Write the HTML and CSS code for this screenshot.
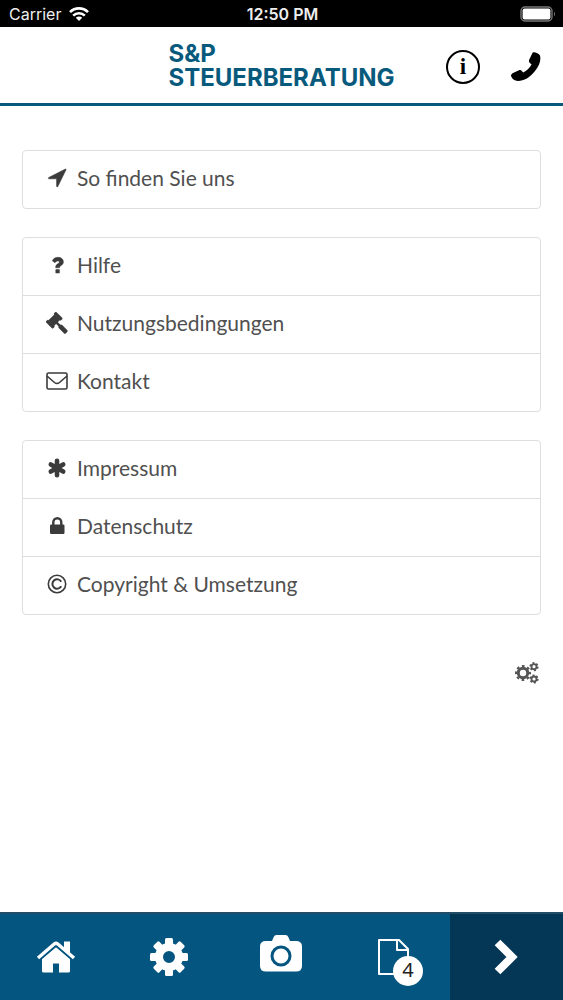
FILE: index.html
```html
<!DOCTYPE html>
<html lang="de">
<head>
<meta charset="utf-8">
<meta name="viewport" content="width=device-width, initial-scale=1">
<title>S&amp;P Steuerberatung</title>
<link rel="stylesheet" href="styles.css">
</head>
<body>
<div class="status">
  <div class="carrier">Carrier
    <svg width="20" height="14" viewBox="0 0 20 14" fill="none" stroke="#fff" stroke-width="2.6"><path d="M1 5.2a12.6 12.6 0 0 1 18 0M4.2 8.6a8.2 8.2 0 0 1 11.6 0"/><path d="M6.8 10.8a4.6 4.6 0 0 1 6.4 0L10 14z" fill="#fff" stroke="none"/></svg>
  </div>
  <div class="time">12:50 PM</div>
  <svg class="battery" width="36" height="16" viewBox="0 0 36 16"><rect x="1" y="1" width="31" height="14" rx="4" fill="none" stroke="#77777a" stroke-width="1.4"/><rect x="2.6" y="2.6" width="27.8" height="10.8" rx="2" fill="#fff"/><path d="M34 5.500q2 2.500 0 5z" fill="#77777a"/></svg>
</div>
<header class="header">
  <h1 class="logo">S&amp;P<br>STEUERBERATUNG</h1>
  <div class="actions">
    <button class="icon-button info" aria-label="Information">i</button>
    <button class="icon-button" aria-label="Anrufen">
      <svg width="30" height="30" viewBox="0 0 30 30"><path d="M22.500 .3C24 0 28 1.500 29 3.500C30.200 8 28.500 13.500 24 19C19 25.500 13 29 7 29C3.500 29 .8 26.800 0 23.800C0 22.600.8 21.600 2 21L8 18.200C9.200 17.700 10.200 18 11 19.200L12.300 20.600C15.500 19 18.600 16 20.600 12.600L18.600 10.700C17.800 9.600 17.700 8.700 18.300 7.600L21.200 1.400C21.500 .7 21.800 .4 22.500 .3Z"/></svg>
    </button>
  </div>
</header>
<main class="content">
  <ul class="group">
    <li><a class="row" href="#anfahrt"><svg viewBox="0 0 22 22"><path d="M19.500 2q.8-.1.500.7l-8.200 16.800q-1 1-1.200-.3v-7.400H2.900q-1.200-.3-.2-1.200z" stroke="#3b3b3b" stroke-width=".6"/></svg>So finden Sie uns</a></li>
  </ul>
  <ul class="group">
    <li><a class="row" href="#hilfe"><svg viewBox="0 0 22 22"><path d="M6.200 6.700Q8.100 3.200 12 3.300c3.200 0 5.400 2 5.400 4.500 0 2.100-1.200 3.100-2.600 4-1 .6-1.300 1-1.300 2H9.700c-.1-2.200.5-3.100 2.400-4.200.9-.5 1.200-.8 1.200-1.500 0-1.500-2.800-1.800-4.300.7z" stroke="#3b3b3b" stroke-width=".5"/><rect x="9.500" y="15.200" width="4.200" height="4" rx=".5"/></svg>Hilfe</a></li>
    <li><a class="row" href="#nutzung"><svg viewBox="0 0 22 22"><g transform="translate(8.200 8.200) rotate(-45)"><rect x="-4.500" y="-4" width="9" height="8"/><rect x="-7.300" y="-5" width="3.400" height="10" rx="1"/><rect x="3.900" y="-5" width="3.400" height="10" rx="1"/><rect x="-1.200" y="3" width="2.400" height="6"/><rect x="-2.300" y="7.500" width="4.600" height="10" rx="1.500"/></g></svg>Nutzungsbedingungen</a></li>
    <li><a class="row" href="#kontakt"><svg viewBox="0 0 22 22" class="line"><rect x="1" y="3" width="20" height="16" rx="1.500"/><path d="M1 6q4 3.500 7.500 6.500 2.500 2 5 0Q17 9.500 21 6"/></svg>Kontakt</a></li>
  </ul>
  <ul class="group">
    <li><a class="row" href="#impressum"><svg viewBox="0 0 22 22"><g stroke="#3b3b3b" stroke-width="4.600" stroke-linecap="round"><path d="M11 3.800v14.400M4.800 7.400l12.400 7.200M17.200 7.400l-12.400 7.200"/></g></svg>Impressum</a></li>
    <li><a class="row" href="#datenschutz"><svg viewBox="0 0 22 22"><rect x="4" y="9.500" width="14.500" height="9.500" rx="1.200"/><path d="M7.300 10V7.200a4 4 0 0 1 8 0V10" fill="none" stroke="#3b3b3b" stroke-width="2.400"/></svg>Datenschutz</a></li>
    <li><a class="row" href="#copyright"><svg viewBox="0 0 22 22" class="line"><circle cx="11" cy="11" r="8.700"/><path d="M15.200 8.700A4.700 4.700 0 1 0 15.200 13.300" stroke-width="2"/></svg>Copyright &amp; Umsetzung</a></li>
  </ul>
  <button class="icon-button settings" aria-label="Optionen">
    <svg width="24" height="24" viewBox="0 0 24 24" fill="none" stroke="#555"><circle cx="8" cy="12" r="4.700" stroke-width="3"/><circle cx="8" cy="12" r="6.900" stroke-width="2.200" stroke-dasharray="2.710" stroke-dashoffset="1.350"/><circle cx="19" cy="5.700" r="2.500" stroke-width="1.800"/><circle cx="19" cy="5.700" r="3.800" stroke-width="1.600" stroke-dasharray="1.990"/><circle cx="19" cy="18" r="2.500" stroke-width="1.800"/><circle cx="19" cy="18" r="3.800" stroke-width="1.600" stroke-dasharray="1.990"/></svg>
  </button>
</main>
<nav class="tabs">
  <a href="#start" aria-label="Start"><svg width="40" height="40" viewBox="0 0 40 40"><path d="M20 10L34 21.500V34q0 1.500-1.500 1.500H23v-9h-6v9H7.500Q6 35.500 6 34V21.500z"/><path d="M28 4.500h6v14l-6-5z"/><path d="M2 21L18.500 6.800q1.500-1.200 3 0L38 21" fill="none" stroke="#fff" stroke-width="3.400"/><path d="M4 23L20 9.400 36 23" fill="none" stroke="#045580" stroke-width="1.200"/></svg></a>
  <a href="#einstellungen" aria-label="Einstellungen"><svg width="40" height="40" viewBox="0 0 40 40"><g transform="translate(20 20)"><path fill-rule="evenodd" d="M-14 0a14 14 0 1 1 28 0a14 14 0 1 1-28 0zM-6 0a6 6 0 1 0 12 0a6 6 0 1 0-12 0z"/><g id="teeth"><rect x="-4" y="-19" width="8" height="7" rx="1.500"/><rect x="-4" y="12" width="8" height="7" rx="1.500"/><rect x="-19" y="-4" width="7" height="8" rx="1.500"/><rect x="12" y="-4" width="7" height="8" rx="1.500"/></g><use href="#teeth" transform="rotate(45)"/></g></svg></a>
  <a href="#foto" aria-label="Foto"><svg class="camera" width="44" height="38" viewBox="0 0 44 38"><path d="M7 6h6l1.700-4Q15.500 0 17.500 0h9q2 0 2.800 2L31 6h6q6 0 6 5.500V31q0 5.500-6 5.500H7Q1 36.500 1 31V11.500Q1 6 7 6z"/><circle cx="22" cy="21" r="9" fill="none" stroke="#045580" stroke-width="3"/></svg></a>
  <a href="#dokumente" aria-label="Dokumente, 4 neu"><span class="documents"><svg width="32" height="36" viewBox="0 0 32 36" fill="none" stroke="#fff" stroke-width="2" stroke-linejoin="round"><path d="M1 1h20l9 9v25H1z"/><path d="M19 1v10h11"/></svg><span class="badge">4</span></span></a>
  <a class="next" href="#weiter" aria-label="Weiter"><svg width="26" height="36" viewBox="0 0 26 36"><path d="M3.500 3.500L18 18 3.500 32.500" fill="none" stroke="#fff" stroke-width="8"/></svg></a>
</nav>
</body>
</html>
```

FILE: styles.css
```css
* { box-sizing: border-box; }

body {
  margin: 0;
  min-height: 100vh;
  display: flex;
  flex-direction: column;
  background: #fff;
  color: #505050;
  font-family: Lato, "Noto Sans", sans-serif;
}

a { color: inherit; text-decoration: none; }

.status {
  height: 27px;
  padding: 1px 7px 0 9px;
  display: grid;
  grid-template-columns: 1fr auto 1fr;
  align-items: center;
  background: #000;
  color: #eee;
  font: 16px/26px Inter, sans-serif;
}
.carrier { display: flex; align-items: center; gap: 8px; }
.time { font-weight: 600; }
.battery { justify-self: end; }

.header {
  height: 79px;
  padding: 3px 22px 0;
  display: grid;
  grid-template-columns: 1fr auto 1fr;
  align-items: center;
  border-bottom: 3px solid #085a7d;
}
.logo {
  grid-column: 2;
  margin: 0;
  padding-bottom: 2px;
  color: #085a7d;
  font: 700 24px/24px Inter, sans-serif;
}
.actions {
  display: flex;
  justify-content: flex-end;
  align-items: center;
  gap: 31px;
}
.icon-button {
  padding: 0;
  border: 0;
  background: none;
  color: #000;
  display: flex;
}
.info {
  width: 34px;
  height: 34px;
  border: 2px solid #000;
  border-radius: 50%;
  justify-content: center;
  align-items: center;
  font: 700 23px/24px "Liberation Serif", serif;
}

.content {
  flex: 1;
  padding: 44px 22px 28px;
  display: flex;
  flex-direction: column;
  gap: 28px;
}
.group {
  margin: 0;
  padding: 0;
  list-style: none;
}
.group li { border: 1px solid #dedede; }
.group li + li { margin-top: -1px; }
.group li:first-child { border-radius: 4px 4px 0 0; }
.group li:last-child { border-radius: 0 0 4px 4px; }
.group li:only-child { border-radius: 4px; }
.row {
  height: 57px;
  padding: 0 23px 3px;
  display: flex;
  align-items: center;
  gap: 9px;
  font-size: 21px;
  line-height: 26px;
}
.row svg { width: 22px; height: 22px; fill: #3b3b3b; flex: none; }
.row .line { fill: none; stroke: #3b3b3b; stroke-width: 1.6px; }

.settings { align-self: flex-end; margin: 18px 2px 0 0; }

.tabs {
  height: 88px;
  display: grid;
  grid-template-columns: repeat(5, 1fr);
  border-top: 2px solid #234d66;
  background: #045580;
}
.tabs a { display: flex; align-items: center; justify-content: center; }
.tabs svg { fill: #fff; }
.tabs .camera { margin-bottom: 6px; }
.documents { position: relative; display: flex; }
.documents svg { fill: none; }
.badge {
  position: absolute;
  left: 15px;
  top: 17px;
  width: 30px;
  height: 30px;
  border-radius: 50%;
  background: #fff;
  color: #222;
  font: 20px/28px "Noto Sans", sans-serif;
  text-align: center;
}
.next { background: #043755; }
```
